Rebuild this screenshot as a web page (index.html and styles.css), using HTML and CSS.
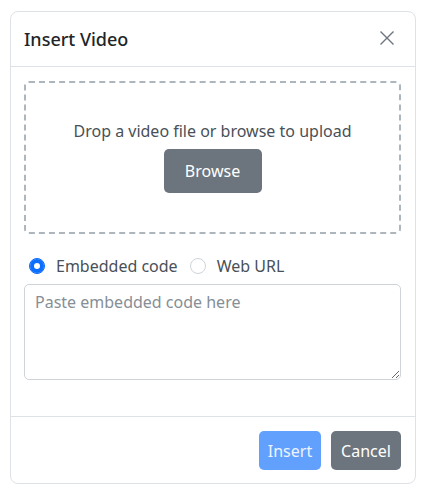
FILE: index.html
```html
<!DOCTYPE html>
<html>
<head>
    <meta charset="UTF-8">
    <title>Insert Video</title>
    <link rel="stylesheet" href="styles.css">
</head>
<body>
<div class="modal">
    <div class="modal-header">
        <span class="modal-title">Insert Video</span>
        <button class="close" type="button" aria-label="Close">
            <svg width="16" height="16" viewBox="0 0 16 16"><path d="M1.5 1.5 L14.5 14.5 M14.5 1.5 L1.5 14.5" stroke="#6c757d" stroke-width="1.4" fill="none"/></svg>
        </button>
    </div>

    <div class="modal-body">
        <div class="dropzone">
            <span class="drop-text">Drop a video file or browse to upload</span>
            <button class="btn btn-secondary browse" type="button">Browse</button>
        </div>

        <div class="radios">
            <label class="radio"><input type="radio" name="kind" checked><span>Embedded code</span></label>
            <label class="radio"><input type="radio" name="kind"><span>Web URL</span></label>
        </div>

        <textarea class="code" placeholder="Paste embedded code here"></textarea>
    </div>

    <div class="modal-footer">
        <button class="btn btn-primary insert" type="button" disabled>Insert</button>
        <button class="btn btn-secondary cancel" type="button">Cancel</button>
    </div>
</div>
</body>
</html>
```

FILE: styles.css
```css
html, body {
margin: 0;
padding: 0;
}

body {
background: #fff;
font-family: "Noto Sans", "Open Sans", Arial, sans-serif;
font-size: 16px;
color: #212529;
padding: 11px 10px;
}

.modal {
width: 406px;
box-sizing: border-box;
border: 1px solid #dee2e6;
border-radius: 8px;
background: #fff;
}

.modal-header {
height: 54px;
display: flex;
align-items: center;
justify-content: space-between;
padding: 0 14px 0 13px;
border-bottom: 1px solid #dee2e6;
}

.modal-title {
font-size: 18px;
font-weight: 500;
color: #212529;
}

.close {
border: 0;
background: none;
padding: 0;
margin-right: 6px;
margin-top: -2px;
width: 16px;
height: 16px;
display: flex;
cursor: pointer;
}

.modal-body {
padding: 14px 14px 36px 13px;
}

.dropzone {
height: 153px;
box-sizing: border-box;
border: 2px dashed #adb5bd;
border-radius: 5px;
display: flex;
flex-direction: column;
align-items: center;
justify-content: center;
gap: 6px;
padding-bottom: 4px;
}

.drop-text {
color: #495057;
line-height: 24px;
}

.btn {
font-family: inherit;
font-size: 16px;
border: 0;
border-radius: 5px;
color: #fff;
height: 39px;
padding: 0;
cursor: pointer;
}

.btn-secondary {
background: #6c757d;
}

.btn-primary {
background: #0d6efd;
opacity: 0.65;
color: #e6efff;
}

.browse {
height: 44px;
width: 98px;
}

.insert {
width: 62px;
}

.cancel {
width: 70px;
}

.radios {
display: flex;
align-items: center;
height: 24px;
margin: 20px 0 6px 5px;
gap: 12px;
color: #495057;
}

.radio {
display: flex;
align-items: center;
}

.radio input {
appearance: none;
width: 16px;
height: 16px;
margin: 0 11px 0 0;
border: 1px solid #ced4da;
border-radius: 50%;
background: #fff;
}

.radio input:checked {
border-color: #0d6efd;
background: #0d6efd;
box-shadow: inset 0 0 0 4px #0d6efd, inset 0 0 0 8px #fff;
}

.code {
display: block;
width: 100%;
height: 96px;
box-sizing: border-box;
border: 1px solid #ced4da;
border-radius: 5px;
padding: 6px 10px;
font-family: inherit;
font-size: 16px;
color: #212529;
margin: 0;
}

.code::placeholder {
color: #868e96;
}

.modal-footer {
display: flex;
justify-content: flex-end;
gap: 10px;
border-top: 1px solid #dee2e6;
padding: 14px 14px 13px;
}
```
